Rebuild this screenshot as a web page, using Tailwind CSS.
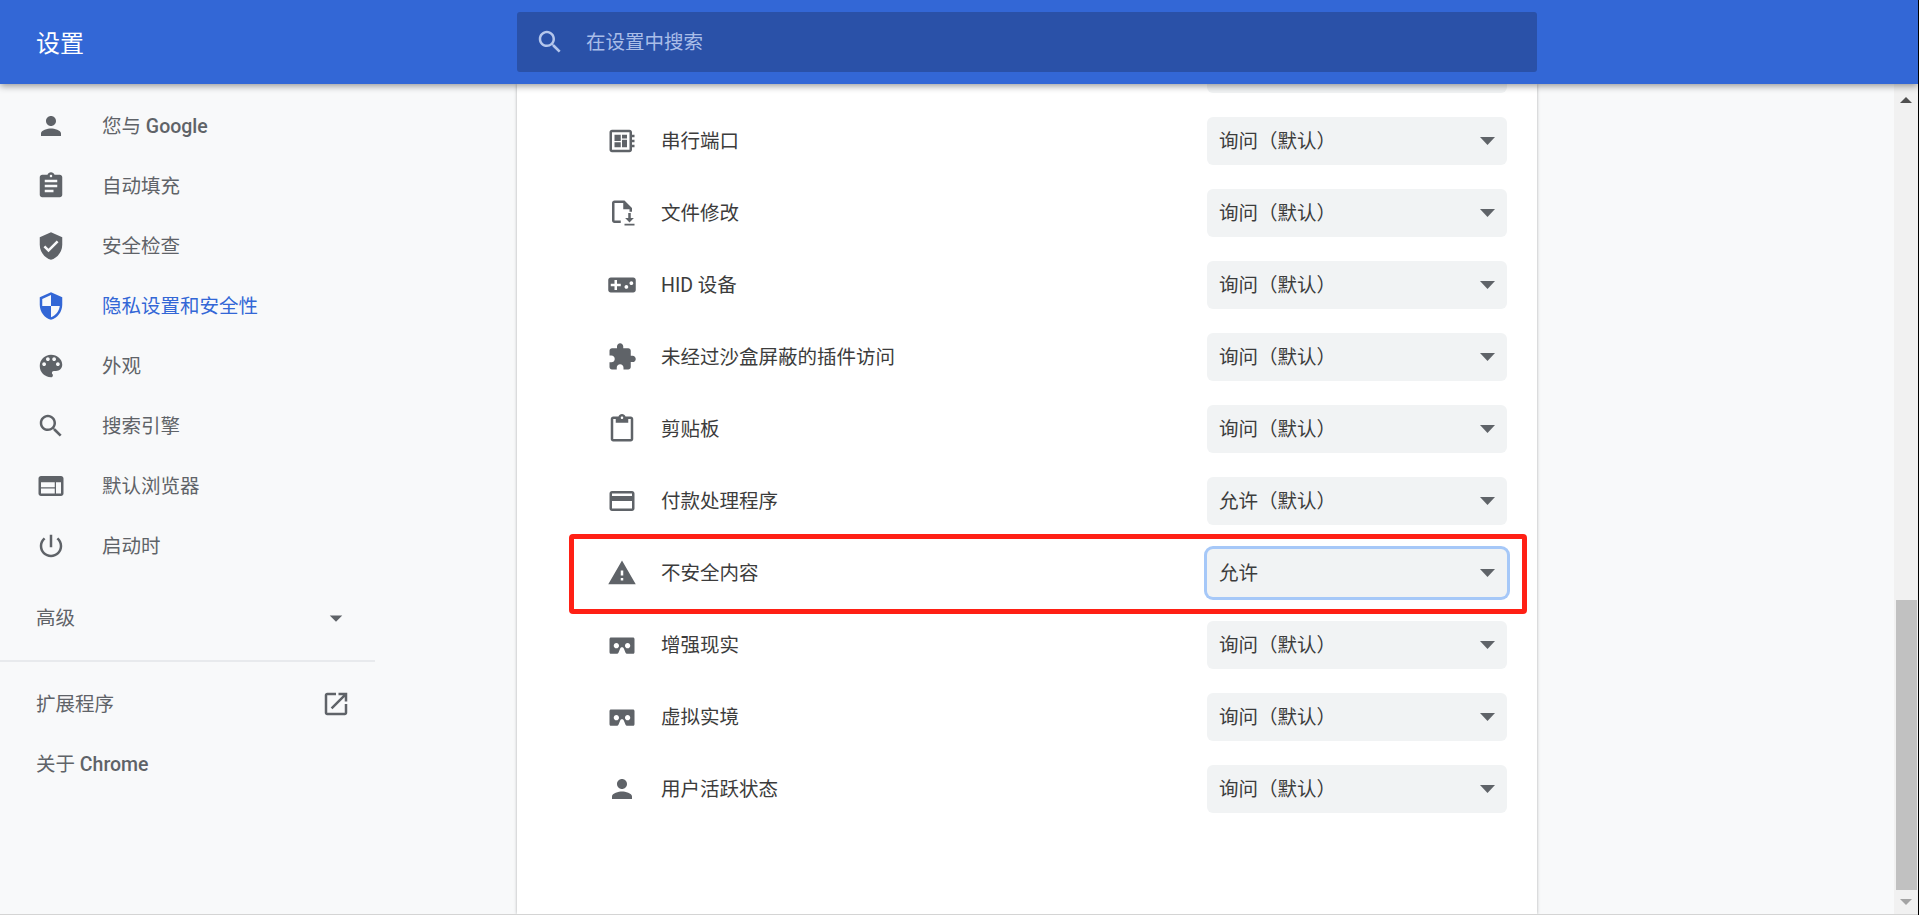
<!DOCTYPE html>
<html lang="zh-CN">
<head>
    <meta charset="UTF-8">
    <title>设置</title>
    <script src="https://cdn.jsdelivr.net/npm/@tailwindcss/browser@4"></script>
</head>
<body class="bg-[#f8f9fa] overflow-hidden font-['Roboto','Noto_Sans_CJK_SC',sans-serif]">
<div class="flex h-[915px] w-[1919px]">
    <div class="flex flex-col w-[1918px] h-full">
        <!-- Header -->
        <header class="relative z-10 flex items-center h-[84px] shrink-0 bg-[#3367d6] shadow-[0_2px_7px_rgba(0,0,0,0.4)]">
            <h1 class="w-[517px] pl-[36px] pt-[4px] text-[24px] text-white">设置</h1>
            <div class="flex items-center w-[1020px] h-[60px] pl-[18px] rounded-[3px] bg-[#2a51a8]">
                <svg class="w-[30px] h-[30px] fill-[#b4c6ec]" viewBox="0 0 24 24"><path d="M15.5 14h-.79l-.28-.27C15.41 12.59 16 11.11 16 9.5 16 5.91 13.09 3 9.5 3S3 5.91 3 9.5 5.91 16 9.5 16c1.61 0 3.09-.59 4.23-1.57l.27.28v.79l5 4.99L20.49 19l-4.99-5zm-6 0C7.01 14 5 11.99 5 9.5S7.01 5 9.5 5 14 7.01 14 9.5 11.99 14 9.5 14z"/></svg>
                <span class="ml-[21px] pt-[2px] text-[19.5px] text-[#a9bde8]">在设置中搜索</span>
            </div>
        </header>

        <main class="flex flex-1 min-h-0 overflow-hidden">
            <!-- Sidebar -->
            <nav class="w-[517px] shrink-0 pt-[12px] text-[19.5px] text-[#5f6368] [&_span]:pt-[2px]">
                <div class="flex items-center h-[60px] pl-[36px] gap-[36px]">
                    <svg class="w-[30px] h-[30px] fill-[#5f6368]" viewBox="0 0 24 24"><path d="M12 12c2.21 0 4-1.79 4-4s-1.79-4-4-4-4 1.79-4 4 1.79 4 4 4zm0 2c-2.67 0-8 1.34-8 4v2h16v-2c0-2.66-5.33-4-8-4z"/></svg>
                    <span>您与 <span class="font-medium">Google</span></span>
                </div>
                <div class="flex items-center h-[60px] pl-[36px] gap-[36px]">
                    <svg class="w-[30px] h-[30px] fill-[#5f6368]" viewBox="0 0 24 24"><path d="M19 3h-4.18C14.4 1.84 13.3 1 12 1c-1.3 0-2.4.84-2.82 2H5c-1.1 0-2 .9-2 2v14c0 1.1.9 2 2 2h14c1.1 0 2-.9 2-2V5c0-1.1-.9-2-2-2zm-7 0c.55 0 1 .45 1 1s-.45 1-1 1-1-.45-1-1 .45-1 1-1zm2 14H7v-2h7v2zm3-4H7v-2h10v2zm0-4H7V7h10v2z"/></svg>
                    <span>自动填充</span>
                </div>
                <div class="flex items-center h-[60px] pl-[36px] gap-[36px]">
                    <svg class="w-[30px] h-[30px] fill-[#5f6368]" viewBox="0 0 24 24"><path d="M12 1L3 5v6c0 5.55 3.84 10.74 9 12 5.16-1.26 9-6.45 9-12V5l-9-4zm-2 16l-4-4 1.41-1.41L10 14.17l6.59-6.59L18 9l-8 8z"/></svg>
                    <span>安全检查</span>
                </div>
                <div class="flex items-center h-[60px] pl-[36px] gap-[36px] text-[#3367d6]">
                    <svg class="w-[30px] h-[30px] fill-[#3367d6]" viewBox="0 0 24 24"><path d="M12 1L3 5v6c0 5.55 3.84 10.74 9 12 5.16-1.26 9-6.45 9-12V5l-9-4zm0 10.99h7c-.53 4.12-3.28 7.79-7 8.94V12H5V6.3l7-3.11v8.8z"/></svg>
                    <span>隐私设置和安全性</span>
                </div>
                <div class="flex items-center h-[60px] pl-[36px] gap-[36px]">
                    <svg class="w-[30px] h-[30px] fill-[#5f6368]" viewBox="0 0 24 24"><path d="M12 3c-4.97 0-9 4.03-9 9s4.03 9 9 9c.83 0 1.5-.67 1.5-1.5 0-.39-.15-.74-.39-1.01-.23-.26-.38-.61-.38-.99 0-.83.67-1.5 1.5-1.5H16c2.76 0 5-2.24 5-5 0-4.42-4.03-8-9-8zm-5.5 9c-.83 0-1.5-.67-1.5-1.5S5.67 9 6.5 9 8 9.67 8 10.5 7.33 12 6.5 12zm3-4C8.67 8 8 7.33 8 6.5S8.67 5 9.5 5s1.5.67 1.5 1.5S10.33 8 9.5 8zm5 0c-.83 0-1.5-.67-1.5-1.5S13.67 5 14.5 5s1.5.67 1.5 1.5S15.33 8 14.5 8zm3 4c-.83 0-1.5-.67-1.5-1.5S16.67 9 17.5 9s1.5.67 1.5 1.5-.67 1.5-1.5 1.5z"/></svg>
                    <span>外观</span>
                </div>
                <div class="flex items-center h-[60px] pl-[36px] gap-[36px]">
                    <svg class="w-[30px] h-[30px] fill-[#5f6368]" viewBox="0 0 24 24"><path d="M15.5 14h-.79l-.28-.27C15.41 12.59 16 11.11 16 9.5 16 5.91 13.09 3 9.5 3S3 5.91 3 9.5 5.91 16 9.5 16c1.61 0 3.09-.59 4.23-1.57l.27.28v.79l5 4.99L20.49 19l-4.99-5zm-6 0C7.01 14 5 11.99 5 9.5S7.01 5 9.5 5 14 7.01 14 9.5 11.99 14 9.5 14z"/></svg>
                    <span>搜索引擎</span>
                </div>
                <div class="flex items-center h-[60px] pl-[36px] gap-[36px]">
                    <svg class="w-[30px] h-[30px] fill-[#5f6368]" viewBox="0 0 24 24"><path d="M20 4H4c-1.1 0-1.99.9-1.99 2L2 18c0 1.1.9 2 2 2h16c1.1 0 2-.9 2-2V6c0-1.1-.9-2-2-2zm-5 14H4v-4h11v4zm0-5H4V9h11v4zm5 5h-4V9h4v9z"/></svg>
                    <span>默认浏览器</span>
                </div>
                <div class="flex items-center h-[60px] pl-[36px] gap-[36px]">
                    <svg class="w-[30px] h-[30px] fill-[#5f6368]" viewBox="0 0 24 24"><path d="M13 3h-2v10h2V3zm4.83 2.17l-1.42 1.42C17.99 7.86 19 9.81 19 12c0 3.87-3.13 7-7 7s-7-3.13-7-7c0-2.19 1.01-4.14 2.58-5.42L6.17 5.17C4.23 6.82 3 9.26 3 12c0 4.97 4.03 9 9 9s9-4.03 9-9c0-2.74-1.23-5.18-3.17-6.83z"/></svg>
                    <span>启动时</span>
                </div>

                <div class="flex items-center justify-between w-[375px] h-[60px] mt-[12px] pl-[36px] pr-[24px]">
                    <span>高级</span>
                    <svg class="w-[30px] h-[30px] fill-[#5f6368]" viewBox="0 0 24 24"><path d="M7 10l5 5 5-5z"/></svg>
                </div>
                <div class="w-[375px] h-[2px] mt-[12px] bg-[#e8eaed]"></div>
                <div class="flex items-center justify-between w-[375px] h-[60px] mt-[12px] pl-[36px] pr-[24px]">
                    <span>扩展程序</span>
                    <svg class="w-[30px] h-[30px] fill-[#5f6368]" viewBox="0 0 24 24"><path d="M19 19H5V5h7V3H5c-1.11 0-2 .9-2 2v14c0 1.1.89 2 2 2h14c1.1 0 2-.9 2-2v-7h-2v7zM14 3v2h3.59l-9.83 9.83 1.41 1.41L19 6.41V10h2V3h-7z"/></svg>
                </div>
                <div class="flex items-center h-[60px] pl-[36px]">
                    <span>关于 <span class="font-medium">Chrome</span></span>
                </div>
            </nav>

            <!-- Settings card, scrolled so the first select is cut by the header -->
            <section class="w-[1020px] shrink-0 bg-white shadow-[0_0_3px_rgba(60,64,67,0.4)] text-[19.5px] text-[#3c3c3c] [&_span]:pt-[2px]">
                <div class="-mt-[51px]">
                    <div class="flex items-center h-[72px] pr-[30px]">
                        <div class="ml-auto w-[300px] h-[48px] rounded-[6px] bg-[#f1f3f4]"></div>
                    </div>

                    <div class="flex items-center h-[72px] pl-[90px] pr-[30px]">
                        <svg class="w-[30px] h-[30px] fill-[#5f6368]" viewBox="0 0 24 24"><path d="M22 9V7h-2V5c0-1.1-.9-2-2-2H4c-1.1 0-2 .9-2 2v14c0 1.1.9 2 2 2h14c1.1 0 2-.9 2-2v-2h2v-2h-2v-2h2v-2h-2V9h2zm-4 10H4V5h14v14zM6 13h5v4H6zm6-6h4v3h-4zM6 7h5v5H6zm6 4h4v6h-4z"/></svg>
                        <span class="ml-[24px]">串行端口</span>
                        <div class="flex items-center justify-between ml-auto w-[300px] h-[48px] pl-[12px] pr-[12px] rounded-[6px] bg-[#f1f3f4]">
                            <span>询问（默认）</span>
                            <svg class="w-[15px] h-[8px] fill-[#5f6368]" viewBox="0 0 15 8"><path d="M0 0h15L7.5 8z"/></svg>
                        </div>
                    </div>

                    <div class="flex items-center h-[72px] pl-[90px] pr-[30px]">
                        <svg class="w-[30px] h-[30px] fill-[#5f6368]" viewBox="0 0 24 24"><path d="M14 2H6c-1.1 0-2 .9-2 2v14c0 1.1.9 2 2 2h5v-2H6V4h7v5h5v2h2V8l-6-6z"/><path d="M17 12h2v4h2.5L18 19.5 14.5 16H17zM14 20.5h8V22h-8z"/></svg>
                        <span class="ml-[24px]">文件修改</span>
                        <div class="flex items-center justify-between ml-auto w-[300px] h-[48px] pl-[12px] pr-[12px] rounded-[6px] bg-[#f1f3f4]">
                            <span>询问（默认）</span>
                            <svg class="w-[15px] h-[8px] fill-[#5f6368]" viewBox="0 0 15 8"><path d="M0 0h15L7.5 8z"/></svg>
                        </div>
                    </div>

                    <div class="flex items-center h-[72px] pl-[90px] pr-[30px]">
                        <svg class="w-[30px] h-[30px] fill-[#5f6368]" viewBox="0 0 24 24"><path d="M21 6H3c-1.1 0-2 .9-2 2v8c0 1.1.9 2 2 2h18c1.1 0 2-.9 2-2V8c0-1.1-.9-2-2-2zm-10 7H8v3H6v-3H3v-2h3V8h2v3h3v2zm4.5 2c-.83 0-1.5-.67-1.5-1.5s.67-1.5 1.5-1.5 1.5.67 1.5 1.5-.67 1.5-1.5 1.5zm4-3c-.83 0-1.5-.67-1.5-1.5S18.67 9 19.5 9s1.5.67 1.5 1.5-.67 1.5-1.5 1.5z"/></svg>
                        <span class="ml-[24px]">HID 设备</span>
                        <div class="flex items-center justify-between ml-auto w-[300px] h-[48px] pl-[12px] pr-[12px] rounded-[6px] bg-[#f1f3f4]">
                            <span>询问（默认）</span>
                            <svg class="w-[15px] h-[8px] fill-[#5f6368]" viewBox="0 0 15 8"><path d="M0 0h15L7.5 8z"/></svg>
                        </div>
                    </div>

                    <div class="flex items-center h-[72px] pl-[90px] pr-[30px]">
                        <svg class="w-[30px] h-[30px] fill-[#5f6368]" viewBox="0 0 24 24"><path d="M20.5 11H19V7c0-1.1-.9-2-2-2h-4V3.5C13 2.12 11.88 1 10.5 1S8 2.12 8 3.5V5H4c-1.1 0-1.99.9-1.99 2v3.8H3.5c1.49 0 2.7 1.21 2.7 2.7s-1.21 2.7-2.7 2.7H2V20c0 1.1.9 2 2 2h3.8v-1.5c0-1.49 1.21-2.7 2.7-2.7 1.49 0 2.7 1.21 2.7 2.7V22H17c1.1 0 2-.9 2-2v-4h1.5c1.38 0 2.5-1.12 2.5-2.5S21.88 11 20.5 11z"/></svg>
                        <span class="ml-[24px]">未经过沙盒屏蔽的插件访问</span>
                        <div class="flex items-center justify-between ml-auto w-[300px] h-[48px] pl-[12px] pr-[12px] rounded-[6px] bg-[#f1f3f4]">
                            <span>询问（默认）</span>
                            <svg class="w-[15px] h-[8px] fill-[#5f6368]" viewBox="0 0 15 8"><path d="M0 0h15L7.5 8z"/></svg>
                        </div>
                    </div>

                    <div class="flex items-center h-[72px] pl-[90px] pr-[30px]">
                        <svg class="w-[30px] h-[30px] fill-[#5f6368]" viewBox="0 0 24 24"><path d="M19 2h-4.18C14.4.84 13.3 0 12 0c-1.3 0-2.4.84-2.82 2H5c-1.1 0-2 .9-2 2v16c0 1.1.9 2 2 2h14c1.1 0 2-.9 2-2V4c0-1.1-.9-2-2-2zm-7 0c.55 0 1 .45 1 1s-.45 1-1 1-1-.45-1-1 .45-1 1-1zm7 18H5V4h2v3h10V4h2v16z"/></svg>
                        <span class="ml-[24px]">剪贴板</span>
                        <div class="flex items-center justify-between ml-auto w-[300px] h-[48px] pl-[12px] pr-[12px] rounded-[6px] bg-[#f1f3f4]">
                            <span>询问（默认）</span>
                            <svg class="w-[15px] h-[8px] fill-[#5f6368]" viewBox="0 0 15 8"><path d="M0 0h15L7.5 8z"/></svg>
                        </div>
                    </div>

                    <div class="flex items-center h-[72px] pl-[90px] pr-[30px]">
                        <svg class="w-[30px] h-[30px] fill-[#5f6368]" viewBox="0 0 24 24"><path d="M20 4H4c-1.11 0-1.99.89-1.99 2L2 18c0 1.11.89 2 2 2h16c1.11 0 2-.89 2-2V6c0-1.11-.89-2-2-2zm0 14H4v-6h16v6zm0-10H4V6h16v2z"/></svg>
                        <span class="ml-[24px]">付款处理程序</span>
                        <div class="flex items-center justify-between ml-auto w-[300px] h-[48px] pl-[12px] pr-[12px] rounded-[6px] bg-[#f1f3f4]">
                            <span>允许（默认）</span>
                            <svg class="w-[15px] h-[8px] fill-[#5f6368]" viewBox="0 0 15 8"><path d="M0 0h15L7.5 8z"/></svg>
                        </div>
                    </div>

                    <!-- Highlighted row: red annotation box lies over the row -->
                    <div class="relative flex items-center h-[72px] pl-[90px] pr-[30px]">
                        <svg class="w-[30px] h-[30px] fill-[#5f6368]" viewBox="0 0 24 24"><path d="M1 21h22L12 2 1 21zm12-3h-2v-2h2v2zm0-4h-2v-4h2v4z"/></svg>
                        <span class="ml-[24px]">不安全内容</span>
                        <div class="flex items-center justify-between ml-auto w-[300px] h-[48px] pl-[12px] pr-[12px] rounded-[6px] bg-[#f1f3f4] ring-[3px] ring-[#a6c8f8]">
                            <span>允许</span>
                            <svg class="w-[15px] h-[8px] fill-[#5f6368]" viewBox="0 0 15 8"><path d="M0 0h15L7.5 8z"/></svg>
                        </div>
                        <div class="absolute left-[52px] right-[10px] -top-[3px] -bottom-[5px] border-[5px] border-[#ff2015] rounded-[4px]"></div>
                    </div>

                    <div class="flex items-center h-[72px] pl-[90px] pr-[30px]">
                        <svg class="w-[30px] h-[30px] fill-[#5f6368]" viewBox="0 0 24 24"><path d="M20.74 6H3.21C2.55 6 2 6.57 2 7.28v10.44c0 .7.55 1.28 1.23 1.28h4.79c.52 0 .96-.33 1.14-.79l1.4-3.48c.23-.59.79-1.01 1.44-1.01s1.21.42 1.45 1.01l1.39 3.48c.19.46.63.79 1.11.79h4.79c.71 0 1.26-.57 1.26-1.28V7.28c0-.71-.55-1.28-1.26-1.28zM7.5 14.62c-1.17 0-2.13-.95-2.13-2.12 0-1.17.96-2.13 2.13-2.13s2.12.96 2.12 2.13-.95 2.12-2.12 2.12zm9 0c-1.17 0-2.13-.95-2.13-2.12 0-1.17.96-2.13 2.13-2.13s2.12.96 2.12 2.13-.95 2.12-2.12 2.12z"/></svg>
                        <span class="ml-[24px]">增强现实</span>
                        <div class="flex items-center justify-between ml-auto w-[300px] h-[48px] pl-[12px] pr-[12px] rounded-[6px] bg-[#f1f3f4]">
                            <span>询问（默认）</span>
                            <svg class="w-[15px] h-[8px] fill-[#5f6368]" viewBox="0 0 15 8"><path d="M0 0h15L7.5 8z"/></svg>
                        </div>
                    </div>

                    <div class="flex items-center h-[72px] pl-[90px] pr-[30px]">
                        <svg class="w-[30px] h-[30px] fill-[#5f6368]" viewBox="0 0 24 24"><path d="M20.74 6H3.21C2.55 6 2 6.57 2 7.28v10.44c0 .7.55 1.28 1.23 1.28h4.79c.52 0 .96-.33 1.14-.79l1.4-3.48c.23-.59.79-1.01 1.44-1.01s1.21.42 1.45 1.01l1.39 3.48c.19.46.63.79 1.11.79h4.79c.71 0 1.26-.57 1.26-1.28V7.28c0-.71-.55-1.28-1.26-1.28zM7.5 14.62c-1.17 0-2.13-.95-2.13-2.12 0-1.17.96-2.13 2.13-2.13s2.12.96 2.12 2.13-.95 2.12-2.12 2.12zm9 0c-1.17 0-2.13-.95-2.13-2.12 0-1.17.96-2.13 2.13-2.13s2.12.96 2.12 2.13-.95 2.12-2.12 2.12z"/></svg>
                        <span class="ml-[24px]">虚拟实境</span>
                        <div class="flex items-center justify-between ml-auto w-[300px] h-[48px] pl-[12px] pr-[12px] rounded-[6px] bg-[#f1f3f4]">
                            <span>询问（默认）</span>
                            <svg class="w-[15px] h-[8px] fill-[#5f6368]" viewBox="0 0 15 8"><path d="M0 0h15L7.5 8z"/></svg>
                        </div>
                    </div>

                    <div class="flex items-center h-[72px] pl-[90px] pr-[30px]">
                        <svg class="w-[30px] h-[30px] fill-[#5f6368]" viewBox="0 0 24 24"><path d="M12 12c2.21 0 4-1.79 4-4s-1.79-4-4-4-4 1.79-4 4 1.79 4 4 4zm0 2c-2.67 0-8 1.34-8 4v2h16v-2c0-2.66-5.33-4-8-4z"/></svg>
                        <span class="ml-[24px]">用户活跃状态</span>
                        <div class="flex items-center justify-between ml-auto w-[300px] h-[48px] pl-[12px] pr-[12px] rounded-[6px] bg-[#f1f3f4]">
                            <span>询问（默认）</span>
                            <svg class="w-[15px] h-[8px] fill-[#5f6368]" viewBox="0 0 15 8"><path d="M0 0h15L7.5 8z"/></svg>
                        </div>
                    </div>
                </div>
            </section>

            <div class="flex-1"></div>

            <!-- Scrollbar -->
            <div class="flex flex-col w-[24px] shrink-0 bg-[#f1f1f1]">
                <div class="flex items-end justify-center h-[26px] pb-[7px]">
                    <svg class="w-[12px] h-[6px] fill-[#505050]" viewBox="0 0 12 6"><path d="M6 0l6 6H0z"/></svg>
                </div>
                <div class="ml-[2px] w-[21px] h-[290px] mt-[490px] bg-[#c1c1c1]"></div>
                <div class="flex items-center justify-center h-[24px]">
                    <svg class="w-[12px] h-[6px] fill-[#a3a3a3]" viewBox="0 0 12 6"><path d="M0 0h12L6 6z"/></svg>
                </div>
            </div>
        </main>
        <div class="h-px shrink-0 bg-[#d4d4d4]"></div>
    </div>
    <div class="w-px h-full bg-black"></div>
</div>
</body>
</html>
